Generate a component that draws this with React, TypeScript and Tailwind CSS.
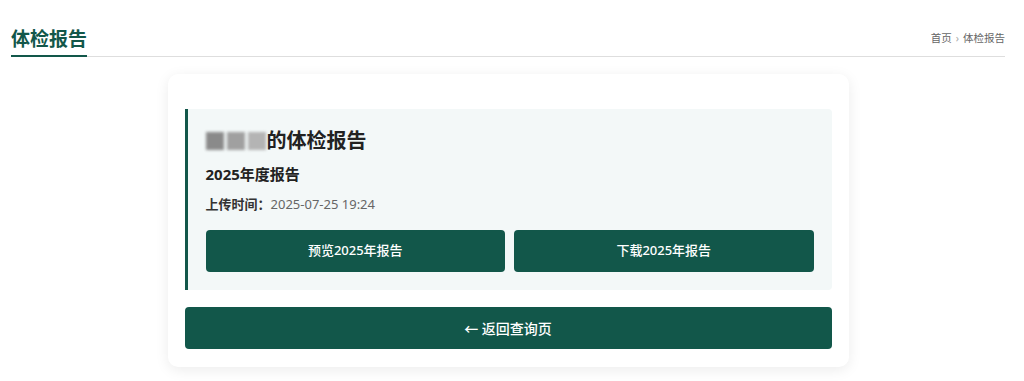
export default function App() {
  return (
    <div
      className="min-h-[381px] bg-white pl-[11px] pr-[19px]"
      style={{ fontFamily: '"Noto Sans", "Noto Sans CJK SC", sans-serif' }}
    >
      {/* Page header */}
      <div className="flex items-end justify-between border-b border-[#dedede] pt-[26px]">
        <h1 className="-mb-px border-b-2 border-[#12574a] pb-[3px] text-[19px] font-bold leading-[26px] text-[#12574a]">
          体检报告
        </h1>
        <div className="mb-[9px] flex items-center gap-[4px] text-[10.5px] text-[#666]">
          <span>首页</span>
          <span className="text-[#aaa]">›</span>
          <span>体检报告</span>
        </div>
      </div>

      {/* Report card */}
      <div className="mx-auto mt-[17px] w-[681px] rounded-[10px] bg-white px-[17px] pb-[18px] pt-[35px] shadow-[0_3px_14px_rgba(0,0,0,0.08)]">
        <div className="rounded-r-[4px] border-l-[3px] border-[#12574a] bg-[#f3f8f8] pb-[18px] pl-[18px] pr-[18px] pt-[16px]">
          <h2 className="flex items-center text-[20px] font-bold leading-[32px] text-[#222]">
            <span className="mr-[1px] flex h-[22px] items-center gap-[3px] blur-[1.5px]">
              <span className="h-[18px] w-[18px] bg-[#8a8a8a]" />
              <span className="h-[18px] w-[18px] bg-[#a0a0a0]" />
              <span className="h-[18px] w-[18px] bg-[#b4b4b4]" />
            </span>
            的体检报告
          </h2>
          <div className="mt-[6px] text-[15px] font-bold leading-[22px] text-[#222]">2025年度报告</div>
          <div className="mt-[9px] text-[13px] leading-[20px]">
            <span className="font-bold text-[#333]">上传时间：</span>
            <span className="text-[#666]">2025-07-25 19:24</span>
          </div>
          <div className="mt-[16px] grid grid-cols-2 gap-[9px]">
            <button className="h-[42px] rounded-[4px] bg-[#12574a] text-[13px] font-medium text-white">
              预览2025年报告
            </button>
            <button className="h-[42px] rounded-[4px] bg-[#12574a] text-[13px] font-medium text-white">
              下载2025年报告
            </button>
          </div>
        </div>
        <button className="mt-[17px] h-[42px] w-full rounded-[4px] bg-[#12574a] text-[14px] font-medium text-white">
          ← 返回查询页
        </button>
      </div>
    </div>
  );
}
